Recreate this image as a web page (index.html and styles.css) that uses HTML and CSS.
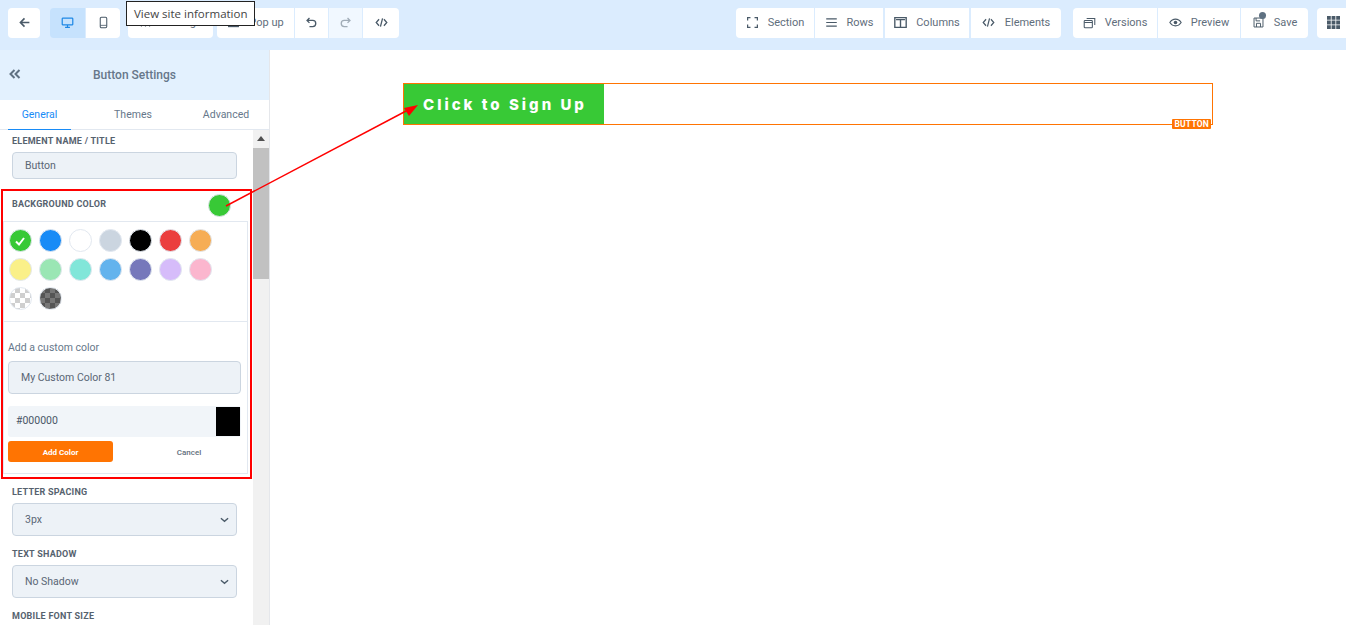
FILE: index.html
```html
<!DOCTYPE html>
<html>
<head>
  <title>Button Settings</title>
  <link rel="stylesheet" href="styles.css">
</head>
<body>
  <header class="topbar">
    <div class="tools">
      <button class="tool back"><svg viewBox="0 0 16 16"><path d="M14 8H3M8 3 3 8l5 5" fill="none" stroke="#4a5a68" stroke-width="2"/></svg></button>
      <div class="group devices">
        <button class="tool device active"><svg viewBox="0 0 16 16"><rect x="1.500" y="2.500" width="13" height="8.500" rx="1" fill="none" stroke="#1e88e5" stroke-width="1.500"/><path d="M5 14h6M8 11v3" stroke="#1e88e5" stroke-width="1.500"/></svg></button>
        <button class="tool device"><svg viewBox="0 0 16 16"><rect x="4" y="1.500" width="8" height="13" rx="1.500" fill="none" stroke="#4a5a68" stroke-width="1.300"/><path d="M4 11.500h8" stroke="#4a5a68"/></svg></button>
      </div>
      <div class="group">
        <button class="tool wide settings"><svg viewBox="0 0 16 16"><path d="M3 3v10M8 3v10M13 3v10" stroke="#4a5a68" stroke-width="1.400"/></svg>Settings</button>
      </div>
      <div class="group">
        <button class="tool wide popup"><svg viewBox="0 0 16 16"><rect x="2" y="3" width="12" height="10" fill="none" stroke="#4a5a68" stroke-width="1.500"/></svg>Pop up</button>
        <button class="tool icon-only"><svg viewBox="0 0 16 16"><path d="M5.500 2.500 2.500 5.500l3 3M3 5.500h6.500a3.700 3.700 0 0 1 0 7.500H5.500" fill="none" stroke="#4a5a68" stroke-width="1.600"/></svg></button>
        <button class="tool icon-only faded"><svg viewBox="0 0 16 16"><path d="M10.500 2.500l3 3-3 3M13 5.500H6.500a3.700 3.700 0 0 0 0 7.500H10.500" fill="none" stroke="#8d9aa6" stroke-width="1.600"/></svg></button>
        <button class="tool icon-only code"><svg viewBox="0 0 16 16"><path d="M5 4 1.500 8 5 12M11 4l3.500 4-3.500 4M9.300 3 6.700 13" fill="none" stroke="#4a5a68" stroke-width="1.600"/></svg></button>
      </div>
    </div>
    <div class="tools">
      <div class="group">
        <button class="tool wide section"><svg viewBox="0 0 16 16"><path d="M2 5.500V2h3.500M10.500 2H14v3.500M14 10.500V14h-3.500M5.500 14H2v-3.500" fill="none" stroke="#4a5a68" stroke-width="1.500"/></svg>Section</button>
        <button class="tool wide rows"><svg viewBox="0 0 16 16"><path d="M1.500 3.500h13M1.500 8h13M1.500 12.500h13" stroke="#4a5a68" stroke-width="1.500"/></svg>Rows</button>
        <button class="tool wide columns"><svg viewBox="0 0 16 16"><path d="M1 2h14v12H1zM8 5v9M2.500 4.500h11" fill="none" stroke="#4a5a68" stroke-width="1.700"/></svg>Columns</button>
        <button class="tool wide elements"><svg viewBox="0 0 16 16"><path d="M5 4 1.500 8 5 12M11 4l3.500 4-3.500 4M9.300 3 6.700 13" fill="none" stroke="#4a5a68" stroke-width="1.500"/></svg>Elements</button>
      </div>
      <div class="group">
        <button class="tool wide versions"><svg viewBox="0 0 16 16"><rect x="1.500" y="5.500" width="10" height="9" rx="1" fill="#fff" stroke="#4a5a68" stroke-width="1.300"/><path d="M1.500 8h10" stroke="#4a5a68" stroke-width="1.500"/><path d="M4.500 3h10v8" fill="none" stroke="#4a5a68" stroke-width="1.300"/></svg>Versions</button>
        <button class="tool wide preview"><svg viewBox="0 0 16 16"><path d="M1 8c3.500-5.500 10.500-5.500 14 0-3.500 5.500-10.500 5.500-14 0z" fill="none" stroke="#4a5a68" stroke-width="1.300"/><circle cx="8" cy="8" r="2.200" fill="#4a5a68"/></svg>Preview</button>
        <button class="tool wide save"><svg viewBox="0 0 16 16"><path d="M2.500 2.500h11v11h-11zM5 2.500v3.500h5M5.500 13.500V9h5v4.500" fill="none" stroke="#4a5a68" stroke-width="1.200"/></svg>Save<span class="save-dot"></span></button>
      </div>
      <div class="group apps">
        <button class="tool icon-only"><svg viewBox="0 0 12 12"><path d="M0 0h3.500v3.500H0zM4.250 0h3.500v3.500h-3.500zM8.500 0H12v3.500H8.500zM0 4.250h3.500v3.500H0zM4.250 4.250h3.500v3.500h-3.500zM8.500 4.250H12v3.500H8.500zM0 8.500h3.500V12H0zM4.250 8.500h3.500V12h-3.500zM8.500 8.500H12V12H8.500z" fill="#4a5a68"/></svg></button>
      </div>
    </div>
  </header>

  <div class="workspace">
    <aside class="sidebar">
      <div class="sidebar-head">
        <svg class="collapse" viewBox="0 0 12 10"><path d="M5.500 1 1.500 5l4 4M10.500 1l-4 4 4 4" fill="none" stroke="#5f7182" stroke-width="2"/></svg>
        <span>Button Settings</span>
      </div>
      <nav class="tabs">
        <a class="tab current">General</a>
        <a class="tab">Themes</a>
        <a class="tab">Advanced</a>
      </nav>
      <div class="panel">
        <div class="panel-body">
          <label class="field-label">ELEMENT NAME / TITLE</label>
          <div class="field">Button</div>

          <div class="color-head">
            <label class="field-label">BACKGROUND COLOR</label>
            <span class="picked"></span>
          </div>
          <div class="color-box">
            <div class="swatches">
              <span class="swatch selected" style="background:#38c936"><svg viewBox="0 0 12 12"><path d="M2 6.500 5 9.500 10 3" fill="none" stroke="#fff" stroke-width="2"/></svg></span>
              <span class="swatch" style="background:#188bf6"></span>
              <span class="swatch" style="background:#fff"></span>
              <span class="swatch" style="background:#cbd5e0"></span>
              <span class="swatch" style="background:#000"></span>
              <span class="swatch" style="background:#eb3e3e"></span>
              <span class="swatch" style="background:#f6ad55"></span>
              <span class="swatch" style="background:#faf089"></span>
              <span class="swatch" style="background:#9ae6b4"></span>
              <span class="swatch" style="background:#81e6d9"></span>
              <span class="swatch" style="background:#63b3ed"></span>
              <span class="swatch" style="background:#7678bb"></span>
              <span class="swatch" style="background:#d6bcfa"></span>
              <span class="swatch" style="background:#fbb6ce"></span>
              <span class="swatch checker light"></span>
              <span class="swatch checker dark"></span>
            </div>
            <div class="custom">
              <div class="custom-title">Add a custom color</div>
              <div class="field name-field">My Custom Color 81</div>
              <div class="hex-row"><span>#000000</span><i class="hex-chip"></i></div>
              <div class="custom-actions">
                <button class="add-btn">Add Color</button>
                <button class="cancel-btn">Cancel</button>
              </div>
            </div>
          </div>

          <label class="field-label spaced">LETTER SPACING</label>
          <div class="field select">3px<svg viewBox="0 0 10 6"><path d="M1 1l4 3.500L9 1" fill="none" stroke="#4a5a68" stroke-width="1.500"/></svg></div>
          <label class="field-label spaced">TEXT SHADOW</label>
          <div class="field select">No Shadow<svg viewBox="0 0 10 6"><path d="M1 1l4 3.500L9 1" fill="none" stroke="#4a5a68" stroke-width="1.500"/></svg></div>
          <label class="field-label spaced">MOBILE FONT SIZE</label>
        </div>
        <div class="scrollbar">
          <span class="scroll-up"></span>
          <span class="scroll-thumb"></span>
        </div>
      </div>
    </aside>

    <main class="canvas">
      <div class="element">
        <a class="cta">Click to Sign Up</a>
        <span class="element-tag">BUTTON</span>
      </div>
    </main>
  </div>

  <div class="tooltip">View site information</div>
  <div class="red-box"></div>
  <svg class="arrow" viewBox="0 0 1346 625">
    <path d="M226 206 408 110" stroke="#f00" stroke-width="1.500"/>
    <path d="M418 105 404 108 409 116z" fill="#f00"/>
  </svg>
</body>
</html>
```

FILE: styles.css
```css
* {
  box-sizing: border-box;
}

html, body {
  height: 100%;
}

body {
  margin: 0;
  overflow: hidden;
  position: relative;
  font-family: Roboto, sans-serif;
  color: #5f6e7c;
  background: #fff;
}

button {
  font-family: inherit;
  border: 0;
  margin: 0;
}

/* top toolbar */
.topbar {
  height: 50px;
  background: #dbecfe;
  padding: 8px 0 0 8px;
  display: flex;
  justify-content: space-between;
  overflow: hidden;
}

.tools {
  display: flex;
  height: 30px;
}

.tools:first-child .group {
  margin-left: 10px;
}

.tools:first-child .group + .group {
  margin-left: 4px;
}

.tools:first-child .devices + .group {
  margin-left: 8px;
}

.tools:last-child .group {
  margin-left: 12px;
}

.tools:last-child .apps {
  margin-left: 9px;
  margin-right: -4px;
}

.group {
  display: flex;
  gap: 1px;
  border-radius: 4px;
  overflow: hidden;
}

.tool {
  height: 30px;
  background: #fff;
  color: #5f6e7c;
  font-size: 11px;
  display: flex;
  align-items: center;
  justify-content: center;
  gap: 9px;
  padding: 0 0 2px;
  position: relative;
}

.tool svg {
  width: 13px;
  height: 13px;
  flex: none;
}

.back {
  width: 32px;
  border-radius: 4px;
}

.device { width: 34px; }
.device.active { background: #c6e2fd; width: 35px; }
.icon-only { width: 33px; }
.faded { background: #f1f8ff; }
.faded svg { opacity: .8; }
.code { width: 36px; }

.settings { width: 85px; }
.popup { width: 77px; }
.section { width: 78px; }
.rows { width: 68px; }
.columns { width: 84px; margin-left: 1px; }
.elements { width: 90px; margin-left: 1px; gap: 10px; }
.versions { width: 84px; }
.preview { width: 82px; }
.save { width: 67px; }

.save-dot {
  position: absolute;
  top: 4px;
  left: 18px;
  width: 7px;
  height: 7px;
  border-radius: 50%;
  background: #5f7182;
}

/* main area */
.workspace {
  display: flex;
  height: 575px;
}

.sidebar {
  width: 270px;
  border-right: 1px solid #e5e7eb;
  display: flex;
  flex-direction: column;
  flex: none;
}

.sidebar-head {
  height: 50px;
  background: #e3f1fe;
  display: flex;
  align-items: center;
  justify-content: center;
  font-size: 12px;
  font-weight: 500;
  color: #66778a;
  position: relative;
}

.collapse {
  position: absolute;
  left: 9px;
  top: 19px;
  width: 12px;
  height: 10px;
}

.tabs {
  height: 30px;
  display: flex;
  font-size: 10.500px;
  border-bottom: 1px solid #e2e8f0;
}

.tab {
  color: #66778a;
  line-height: 29px;
  text-align: center;
}

.tab:nth-child(1) { width: 63px; margin-left: 8px; }
.tab:nth-child(2) { width: 124px; }
.tab:nth-child(3) { width: 62px; }

.current {
  color: #188bf6;
  height: 30px;
  border-bottom: 1px solid #188bf6;
}

.panel {
  flex: 1;
  display: flex;
  min-height: 0;
  overflow: hidden;
}

.panel-body {
  width: 253px;
  flex: none;
}

.field-label {
  display: block;
  margin: 0 0 0 12px;
  padding-top: 6px;
  height: 22px;
  font-size: 9px;
  line-height: 11px;
  font-weight: 700;
  letter-spacing: .25px;
  color: #56626e;
}

.field {
  margin-left: 12px;
  width: 225px;
  height: 27px;
  background: #edf2f7;
  border: 1px solid #cbd5e0;
  border-radius: 4px;
  font-size: 10.500px;
  line-height: 25px;
  padding-left: 12px;
  color: #5a6675;
  position: relative;
}

.color-head {
  display: flex;
  justify-content: space-between;
  align-items: center;
  height: 31px;
  margin-top: 10px;
  padding-right: 22px;
}

.color-head .field-label {
  height: auto;
  padding: 0;
}

.picked {
  width: 23px;
  height: 23px;
  border-radius: 50%;
  background: #38c936;
  border: 1px solid #dfe5ea;
  margin-top: 2px;
}

.color-box {
  margin-left: 3px;
  width: 245px;
  height: 253px;
  border: 1px solid #e2e8f0;
  margin-top: 1px;
}

.swatches {
  display: grid;
  grid-template-columns: repeat(7, 23px);
  grid-auto-rows: 23px;
  column-gap: 7px;
  row-gap: 6px;
  height: 100px;
  padding: 7px 0 0 4.500px;
  border-bottom: 1px solid #e2e8f0;
}

.swatch {
  border-radius: 50%;
  border: 1px solid #e2e8f0;
  display: flex;
  align-items: center;
  justify-content: center;
}

.swatch svg {
  width: 12px;
  height: 12px;
}

.checker.light {
  background: repeating-conic-gradient(#cfcfcf 0 25%, #fff 0 50%) 0 0 / 10px 10px;
}

.checker.dark {
  background: repeating-conic-gradient(#555 0 25%, #777 0 50%) 0 0 / 10px 10px;
}

.custom {
  padding: 19px 6px 0 4px;
}

.custom-title {
  font-size: 10.500px;
  line-height: 13px;
  color: #66778a;
  margin-bottom: 7px;
}

.name-field {
  margin: 0;
  width: 233px;
  height: 33px;
  line-height: 31px;
}

.hex-row {
  margin-top: 12px;
  width: 233px;
  height: 31px;
  background: #f1f5f9;
  border-radius: 3px;
  display: flex;
  justify-content: space-between;
  align-items: center;
  padding: 1px 1px 1px 8px;
  font-size: 10.500px;
  color: #4a5568;
}

.hex-row span {
  margin-bottom: 2px;
}

.hex-chip {
  width: 24px;
  height: 29px;
  background: #000;
}

.custom-actions {
  display: flex;
  margin-top: 4px;
}

.add-btn {
  width: 105px;
  height: 21px;
  padding-top: 2px;
  background: #ff7402;
  border-radius: 3px;
  color: #fff;
  font-size: 8px;
  font-weight: 700;
}

.cancel-btn {
  flex: 1;
  margin-left: 24px;
  padding-top: 2px;
  background: none;
  font-size: 8px;
  font-weight: 500;
  color: #5f6e7c;
}

.spaced {
  height: 23px;
  padding-top: 7px;
}

.color-box + .spaced {
  margin-top: 6px;
}

.select {
  height: 33px;
  line-height: 31px;
}

.select + .spaced {
  margin-top: 6px;
}

.select svg {
  position: absolute;
  right: 7px;
  top: 13px;
  width: 9px;
  height: 6px;
}

.scrollbar {
  width: 16px;
  background: #f1f1f1;
  padding-top: 18px;
  position: relative;
}

.scroll-up {
  position: absolute;
  top: 6px;
  left: 4px;
  border: 4px solid transparent;
  border-top: 0;
  border-bottom: 5px solid #505050;
}

.scroll-thumb {
  display: block;
  height: 131px;
  background: #c1c1c1;
}

/* page canvas */
.canvas {
  flex: 1;
  padding: 33px 133px 0;
}

.element {
  height: 42px;
  border: 1px solid #ff7402;
  position: relative;
}

.cta {
  display: block;
  width: 200px;
  height: 40px;
  background: #38c936;
  color: #fff;
  font-family: Inter, sans-serif;
  font-size: 15px;
  font-weight: 800;
  letter-spacing: 3px;
  line-height: 42px;
  padding-left: 19px;
  white-space: nowrap;
}

.element-tag {
  position: absolute;
  right: 1px;
  bottom: -5px;
  height: 10px;
  padding: 0 2px;
  background: #ff7402;
  color: #fff;
  font-size: 8.500px;
  line-height: 10px;
  font-weight: 700;
  letter-spacing: .2px;
  border-radius: 1px;
}

/* things lying over the page */
.tooltip {
  position: absolute;
  left: 126px;
  top: 1px;
  width: 129px;
  height: 25px;
  background: #fff;
  border: 1px solid #222;
  font-family: "Open Sans", sans-serif;
  font-size: 11.500px;
  line-height: 23px;
  padding-left: 7px;
  color: #444;
  white-space: nowrap;
}

.red-box {
  position: absolute;
  left: 1px;
  top: 189px;
  width: 251px;
  height: 290px;
  border: 2px solid #f00;
  pointer-events: none;
}

.arrow {
  position: absolute;
  left: 0;
  top: 0;
  width: 1346px;
  height: 625px;
  pointer-events: none;
}
```
